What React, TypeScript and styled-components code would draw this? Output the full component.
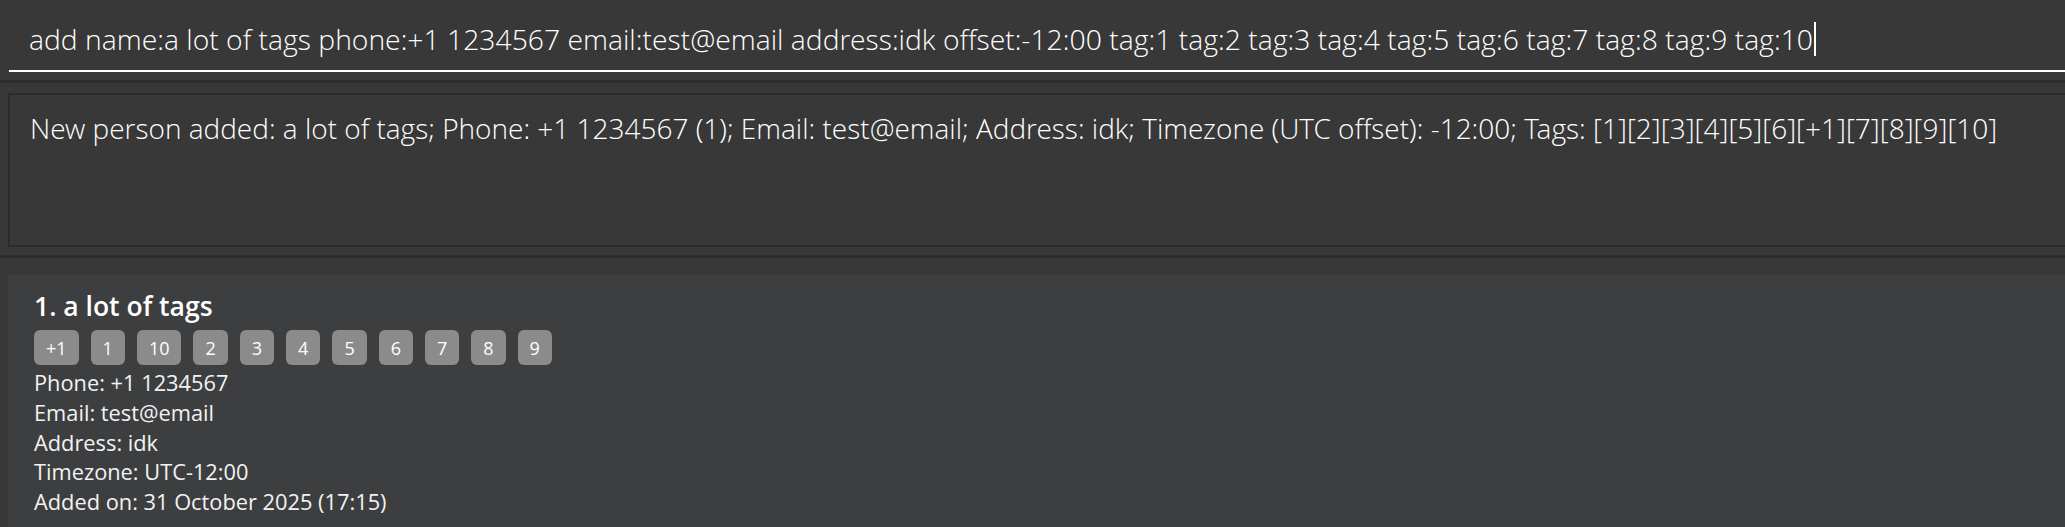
import React from "react";
import styled, { createGlobalStyle } from "styled-components";

const Global = createGlobalStyle`
  html, body {
    margin: 0;
    padding: 0;
    background: #383838;
    overflow: hidden;
  }
  #root {
    width: 2065px;
    height: 527px;
  }
`;

const Root = styled.div`
  display: flex;
  flex-direction: column;
  width: 2065px;
  height: 527px;
  background: #383838;
  overflow: hidden;
`;

const CommandBox = styled.div`
  height: 80px;
  padding-left: 9px;
  box-sizing: border-box;
  flex: none;
`;

const CommandInput = styled.div`
  height: 72px;
  box-sizing: border-box;
  border-bottom: 2px solid #ffffff;
  display: flex;
  align-items: center;
  padding: 8px 0 0 20px;
  font-family: "Open Sans Light", "Open Sans", "Noto Sans", sans-serif;
  font-weight: 300;
  font-size: 28.3px;
  color: #ffffff;
  white-space: nowrap;
`;

const Caret = styled.span`
  display: inline-block;
  width: 2px;
  height: 34px;
  background: #ffffff;
  margin-left: 1px;
`;

const Divider = styled.div`
  height: 3px;
  background: #2d2d2d;
  flex: none;
`;

const ResultPane = styled.div`
  padding: 10px 0 8px 8px;
  flex: none;
`;

const ResultBox = styled.div`
  height: 154px;
  box-sizing: border-box;
  border: 2px solid #2b2b2b;
  border-right: none;
  padding: 14px 0 0 20px;
  font-family: "Open Sans Light", "Open Sans", "Noto Sans", sans-serif;
  font-weight: 300;
  font-size: 28px;
  color: #ffffff;
  white-space: nowrap;
`;

const ListPane = styled.div`
  flex: 1;
  padding: 17px 0 0 8px;
  min-height: 0;
`;

const Card = styled.div`
  height: 100%;
  background: #3d3e40;
  padding: 12px 0 0 26px;
  box-sizing: border-box;
  display: flex;
  flex-direction: column;
  font-family: "Open Sans", "Noto Sans", sans-serif;
  color: #ffffff;
`;

const Name = styled.div`
  font-weight: 600;
  font-size: 26.5px;
  line-height: 38px;
`;

const TagRow = styled.div`
  display: flex;
  gap: 12px;
  margin: 5px 0 3px;
`;

const Tag = styled.span`
  display: flex;
  align-items: center;
  justify-content: center;
  height: 35px;
  min-width: 34px;
  padding: 0 12px;
  box-sizing: border-box;
  background: #8b8b8b;
  border-radius: 6px;
  font-size: 18px;
  font-weight: 400;
  color: #ffffff;
`;

const Detail = styled.div`
  font-size: 21.8px;
  line-height: 29.8px;
  color: #f2f2f2;
`;

const tags = ["+1", "1", "10", "2", "3", "4", "5", "6", "7", "8", "9"];

export default function App() {
  return (
    <Root>
      <Global />
      <CommandBox>
        <CommandInput>
          add name:a lot of tags phone:+1 1234567 email:test@email address:idk offset:-12:00 tag:1 tag:2 tag:3 tag:4 tag:5 tag:6 tag:7 tag:8 tag:9 tag:10
          <Caret />
        </CommandInput>
      </CommandBox>
      <Divider />
      <ResultPane>
        <ResultBox>
          New person added: a lot of tags; Phone: +1 1234567 (1); Email: test@email; Address: idk; Timezone (UTC offset): -12:00; Tags: [1][2][3][4][5][6][+1][7][8][9][10]
        </ResultBox>
      </ResultPane>
      <Divider />
      <ListPane>
        <Card>
          <Name>1. a lot of tags</Name>
          <TagRow>
            {tags.map((t) => (
              <Tag key={t}>{t}</Tag>
            ))}
          </TagRow>
          <Detail>Phone: +1 1234567</Detail>
          <Detail>Email: test@email</Detail>
          <Detail>Address: idk</Detail>
          <Detail>Timezone: UTC-12:00</Detail>
          <Detail>Added on: 31 October 2025 (17:15)</Detail>
        </Card>
      </ListPane>
    </Root>
  );
}
